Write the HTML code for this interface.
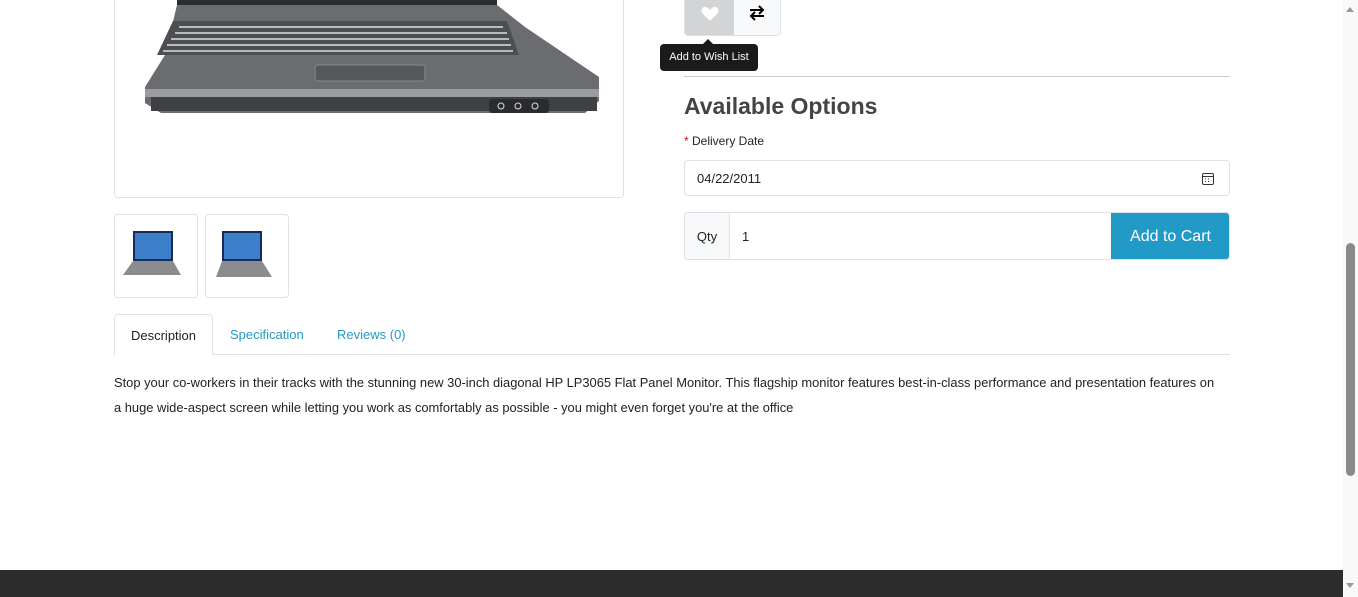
<!DOCTYPE html>
<html><head><meta charset="utf-8"><style>
*{box-sizing:border-box;margin:0;padding:0}
body{width:1358px;height:597px;overflow:hidden;background:#fff;font-family:"Liberation Sans",sans-serif;color:#222;position:relative}
.abs{position:absolute}
</style></head><body>
<div class="abs" style="left:114px;top:-10px;width:510px;height:208px;border:1px solid #dee2e6;border-radius:4px;overflow:hidden">
<svg width="510" height="208" viewBox="0 0 510 208" style="position:absolute;left:0;top:0">
<rect x="62" y="0" width="320" height="14" fill="#2a2c30"/>
<rect x="72" y="0" width="300" height="9" fill="#1f4f9a"/>
<path d="M62 14 L382 14 L410 36 L484 86 L484 110 L470 122 L46 122 L30 112 L30 96 L50 64 Z" fill="#6a6c70"/>
<path d="M58 30 L392 30 L404 64 L42 64 Z" fill="#4c4e52"/>
<g stroke="#b8babd" stroke-width="2">
<line x1="64" y1="36" x2="388" y2="36"/><line x1="60" y1="42" x2="392" y2="42"/>
<line x1="56" y1="48" x2="394" y2="48"/><line x1="52" y1="54" x2="396" y2="54"/><line x1="48" y1="60" x2="398" y2="60"/>
</g>
<rect x="200" y="74" width="110" height="16" rx="3" fill="#56585c" stroke="#888"/>
<path d="M30 98 L484 98 L484 106 L30 106 Z" fill="#9a9c9f"/>
<rect x="36" y="106" width="446" height="14" fill="#3e4044"/>
<rect x="374" y="108" width="60" height="14" rx="3" fill="#2a2b2e"/>
<circle cx="386" cy="115" r="3" fill="none" stroke="#ddd"/><circle cx="403" cy="115" r="3" fill="none" stroke="#ddd"/><circle cx="420" cy="115" r="3" fill="none" stroke="#ddd"/>
</svg></div>
<div class="abs" style="left:114px;top:214px;width:84px;height:84px;border:1px solid #dee2e6;border-radius:4px">
<svg width="82" height="82"><rect x="18" y="16" width="40" height="30" fill="#1a2a5a"/><rect x="20" y="18" width="36" height="26" fill="#3a7fc8"/><path d="M18 46 L58 46 L66 60 L8 60 Z" fill="#8a8c90"/></svg></div>
<div class="abs" style="left:205px;top:214px;width:84px;height:84px;border:1px solid #dee2e6;border-radius:4px">
<svg width="82" height="82"><rect x="16" y="16" width="40" height="30" fill="#1a2a5a"/><rect x="18" y="18" width="36" height="26" fill="#3a7fc8"/><path d="M16 46 L56 46 L66 62 L10 62 Z" fill="#8a8c90"/></svg></div>
<div class="abs" style="left:684px;top:-6px;width:97px;height:42px;border:1px solid #dee2e6;border-radius:4px;overflow:hidden;background:#f8f9fa">
<div class="abs" style="left:0;top:0;width:49px;height:42px;background:#d3d4d5"></div>
<svg class="abs" style="left:16px;top:11px" width="18" height="16" viewBox="0 0 18 16"><path d="M9 15 L2 8 C-1 5 1 0 5 1 C7 1.5 8 3 9 4 C10 3 11 1.5 13 1 C17 0 19 5 16 8 Z" fill="#fff"/></svg>
<svg class="abs" style="left:64px;top:10px" width="16" height="16" viewBox="0 0 16 16" fill="none" stroke="#000" stroke-width="2"><path d="M1 5 H14 M10 1 L14 5 L10 9"/><path d="M15 11 H2 M6 7 L2 11 L6 15"/></svg>
</div>
<div class="abs" style="left:660px;top:44px;width:98px;height:27px;background:#1b1b1b;border-radius:4px;color:#fff;font-size:11px;line-height:27px;text-align:center">Add to Wish List</div>
<div class="abs" style="left:703px;top:39px;width:0;height:0;border-left:5px solid transparent;border-right:5px solid transparent;border-bottom:5px solid #1b1b1b"></div>
<div class="abs" style="left:684px;top:76px;width:546px;height:1px;background:#ccc"></div>
<div class="abs" style="left:684px;top:93px;font-size:23px;font-weight:bold;color:#444">Available Options</div>
<div class="abs" style="left:684px;top:134px;font-size:12px"><span style="color:#e00">*</span> Delivery Date</div>
<div class="abs" style="left:684px;top:160px;width:546px;height:36px;border:1px solid #dee2e6;border-radius:4px;font-size:13px;line-height:35px;padding-left:12px">04/22/2011
<svg class="abs" style="right:15px;top:11px" width="12" height="13" viewBox="0 0 12 13" fill="none" stroke="#333"><rect x="0.5" y="1.5" width="11" height="11" rx="1.5"/><line x1="0.5" y1="4.5" x2="11.5" y2="4.5"/><path d="M3 7h1M6 7h1M3 9.5h1M6 9.5h1"/></svg></div>
<div class="abs" style="left:684px;top:212px;width:546px;height:48px;border:1px solid #dee2e6;border-radius:4px;overflow:hidden">
<div class="abs" style="left:0;top:0;width:45px;height:48px;background:#f8f9fa;border-right:1px solid #dee2e6;font-size:13px;line-height:47px;text-align:center">Qty</div>
<div class="abs" style="left:57px;top:0;font-size:13px;line-height:47px">1</div>
<div class="abs" style="right:-1px;top:-1px;width:119px;height:48px;background:#229ac8;color:#fff;font-size:16px;line-height:49px;text-align:center">Add to Cart</div>
</div>
<div class="abs" style="left:114px;top:354px;width:1116px;height:1px;background:#dee2e6"></div>
<div class="abs" style="left:114px;top:314px;width:99px;height:41px;border:1px solid #dee2e6;border-bottom:none;border-radius:4px 4px 0 0;background:#fff;font-size:13px;line-height:42px;text-align:center">Description</div>
<div class="abs" style="left:230px;top:314px;font-size:13px;line-height:42px;color:#229ac8">Specification</div>
<div class="abs" style="left:337px;top:314px;font-size:13px;line-height:42px;color:#229ac8">Reviews (0)</div>
<div class="abs" style="left:114px;top:370px;width:1106px;font-size:12.9px;line-height:25px">Stop your co-workers in their tracks with the stunning new 30-inch diagonal HP LP3065 Flat Panel Monitor. This flagship monitor features best-in-class performance and presentation features on a huge wide-aspect screen while letting you work as comfortably as possible - you might even forget you're at the office</div>
<div class="abs" style="left:0;top:570px;width:1343px;height:27px;background:#2c2c2c"></div>
<div class="abs" style="left:1343px;top:0;width:15px;height:597px;background:#f9f9f9"></div>
<div class="abs" style="left:1346px;top:243px;width:9px;height:233px;background:#8a8a8a;border-radius:5px"></div>
<div class="abs" style="left:1346px;top:7px;width:0;height:0;border-left:4.5px solid transparent;border-right:4.5px solid transparent;border-bottom:5px solid #9a9a9a"></div>
<div class="abs" style="left:1346px;top:583px;width:0;height:0;border-left:4.5px solid transparent;border-right:4.5px solid transparent;border-top:5px solid #9a9a9a"></div>
</body></html>
